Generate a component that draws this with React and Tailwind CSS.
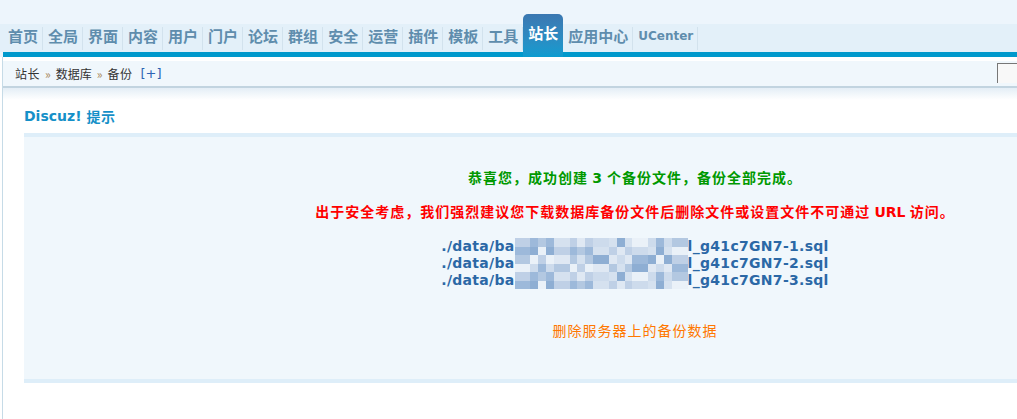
import React from 'react';

const cjk = "font-['Noto_Sans_CJK_SC',sans-serif]";
const latin = "font-['DejaVu_Sans',sans-serif]";

const tabs = ['首页', '全局', '界面', '内容', '用户', '门户', '论坛', '群组', '安全', '运营', '插件', '模板', '工具', '站长', '应用中心', 'UCenter'];

// colours taken from the pixelated blur over the file names
const shades = [
  'bg-[#b3c8e1]',
  'bg-[#9db9da]',
  'bg-[#cddbec]',
  'bg-[#dfe8f3]',
  'bg-[#bfd0e6]',
  'bg-[#eaf1f8]',
  'bg-[#8eaed3]',
  'bg-[#d5e1ef]',
];

function Mosaic({ seed }) {
  const rows = [0, 1];
  const cols = Array.from({ length: 22 }, (_, i) => i);
  return (
    <span className="inline-flex flex-col w-[173px] h-[17px] align-top overflow-hidden">
      {rows.map(r => (
        <span key={r} className="flex h-[8.5px]">
          {cols.map(c => {
            const k = (c * 7 + r * 5 + seed * 11 + ((c * c + seed) % 5)) % shades.length;
            return <span key={c} className={`flex-1 ${shades[k]}`} />;
          })}
        </span>
      ))}
    </span>
  );
}

function Tab({ label, active }) {
  if (active) {
    return (
      <a className="relative z-10 -mb-[5px] h-[43px] px-[5px] flex items-center justify-center rounded-t-[5px] bg-gradient-to-b from-[#3b77b1] to-[#0a9cd0] text-white text-[15px] font-bold pb-[4px]">
        {label}
      </a>
    );
  }
  const isLatin = label === 'UCenter';
  return (
    <a className={`self-center h-[23px] pl-[5px] pr-[4px] pb-[4px] flex items-center border-r border-[#d2e2ed] text-[#5f8dad] font-bold ${isLatin ? `${latin} text-[12px]` : 'text-[15px]'}`}>
      {label}
    </a>
  );
}

export default function App() {
  const files = [1, 2, 3];

  return (
    <div className={`w-screen h-[419px] overflow-hidden bg-white ${cjk}`}>
      <div className="bg-[#edf5fc] pt-[24px]">
        <nav className="h-[28px] pl-[3px] bg-[#e3f0f9] flex items-end">
          {tabs.map(t => (
            <Tab key={t} label={t} active={t === '站长'} />
          ))}
        </nav>
        <div className="ml-[3px] h-[5px] bg-[#0099cc]" />
      </div>

      <div className="ml-[2px] border-l border-[#c6dbe7] h-full">
        <div className="pt-[4px]">
          <div className="h-[27px] bg-[#f0f7fc] border-b-2 border-[#c2d4e0] flex items-center pl-[12px] text-[12px] text-[#333] overflow-hidden">
            <span className="tracking-[0.5px]">站长</span>
            <span className="mx-[5px] text-[#a98a5c] text-[12px]">»</span>
            <span>数据库</span>
            <span className="mx-[5px] text-[#a98a5c] text-[12px]">»</span>
            <span className="tracking-[0.5px]">备份</span>
            <span className={`ml-[8px] text-[#2d64b4] text-[13px] ${latin}`}>[+]</span>
            <div className="ml-auto -mr-[20px] self-start mt-[2px] w-[40px] h-[20px] border-t border-l border-[#777] bg-[#f8f8f8]" />
          </div>
          <div className="h-[12px] bg-gradient-to-b from-[#e4eef6] to-white" />
        </div>

        <h3 className="ml-[21px] mt-[6px] h-[20px] flex items-center text-[14px] font-bold text-[#1590c8]">
          <span className={latin}>Discuz!</span>
          <span className="ml-[5px] tracking-[0.5px]">提示</span>
        </h3>

        <div className="ml-[21px] mt-[7px] w-[1222px] border-y-4 border-[#deeef9] bg-[#f0f7fc] pt-[30px] pb-[40px] text-center">
          <p className="h-[20px] leading-[20px] text-[14px] font-bold tracking-[1px] text-[#009900]">
            恭喜您，成功创建 <span className={latin}>3</span> 个备份文件，备份全部完成。
          </p>
          <p className="mt-[14px] h-[20px] leading-[20px] text-[14px] font-bold tracking-[1px] text-[#ff0000]">
            出于安全考虑，我们强烈建议您下载数据库备份文件后删除文件或设置文件不可通过 <span className={`${latin} tracking-normal`}>URL</span> 访问。
          </p>
          <div className={`mt-[17px] ${latin} text-[14px] font-bold tracking-[0.3px] text-[#2b68a6]`}>
            {files.map(n => (
              <div key={n} className="h-[17px] leading-[17px] whitespace-nowrap">
                ./data/ba<Mosaic seed={n} />l_g41c7GN7-{n}.sql
              </div>
            ))}
          </div>
          <p className="mt-[30px] h-[20px] leading-[20px]">
            <a className="text-[14px] tracking-[1px] text-[#ff7700]">删除服务器上的备份数据</a>
          </p>
        </div>
      </div>
    </div>
  );
}
